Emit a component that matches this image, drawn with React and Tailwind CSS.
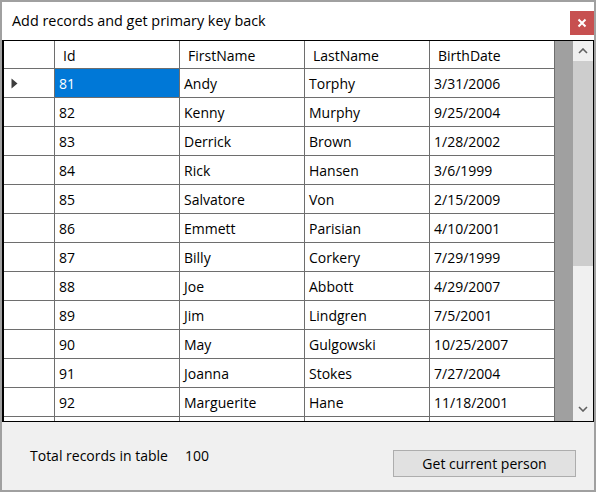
import React from "react";

const rows = [
  ["81", "Andy", "Torphy", "3/31/2006"],
  ["82", "Kenny", "Murphy", "9/25/2004"],
  ["83", "Derrick", "Brown", "1/28/2002"],
  ["84", "Rick", "Hansen", "3/6/1999"],
  ["85", "Salvatore", "Von", "2/15/2009"],
  ["86", "Emmett", "Parisian", "4/10/2001"],
  ["87", "Billy", "Corkery", "7/29/1999"],
  ["88", "Joe", "Abbott", "4/29/2007"],
  ["89", "Jim", "Lindgren", "7/5/2001"],
  ["90", "May", "Gulgowski", "10/25/2007"],
  ["91", "Joanna", "Stokes", "7/27/2004"],
  ["92", "Marguerite", "Hane", "11/18/2001"],
  ["", "", "", ""],
];

const headers = ["Id", "FirstName", "LastName", "BirthDate"];

export default function App() {
  return (
    <div
      className="w-[596px] h-[492px] border-2 border-[#a0a0a0] bg-[#f0f0f0] flex flex-col text-[14px] text-black overflow-hidden"
      style={{ fontFamily: '"Open Sans", "Noto Sans", sans-serif' }}
    >
      {/* Title bar */}
      <div className="h-[38px] shrink-0 bg-white flex items-center pl-[10px]">
        <span className="leading-none text-[14.4px]">Add records and get primary key back</span>
        <div className="ml-auto w-[24px] h-[24px] bg-[#c75050] flex items-center justify-center self-start mt-[9px]">
          <svg width="10" height="10" viewBox="0 0 10 10">
            <path d="M1.5 1.5 L8.5 8.5 M8.5 1.5 L1.5 8.5" stroke="white" strokeWidth="2" />
          </svg>
        </div>
      </div>

      {/* Grid */}
      <div className="h-[382px] shrink-0 border border-l-2 border-black bg-[#a0a0a0] flex">
        <div className="w-[551px] h-full bg-white flex flex-col overflow-hidden">
          <div className="h-[28px] shrink-0 flex">
            <div className="w-[51px] h-full border-r border-b border-[#6e6e6e] bg-white" />
            {headers.map((h) => (
              <div
                key={h}
                className="w-[125px] h-full border-r border-b border-[#6e6e6e] flex items-center pl-[8px] pt-[1px]"
              >
                {h}
              </div>
            ))}
          </div>
          {rows.map((r, i) => (
            <div key={i} className="h-[29px] shrink-0 flex">
              <div className="w-[51px] h-full border-r border-b border-[#6e6e6e] flex items-center pl-[7px]">
                {i === 0 && (
                  <svg width="7" height="11" viewBox="0 0 7 11">
                    <path d="M0.5 0.5 L6.5 5.5 L0.5 10.5 Z" fill="#3c3c3c" />
                  </svg>
                )}
              </div>
              {r.map((c, j) => (
                <div
                  key={j}
                  className={
                    i === 0 && j === 0
                      ? "w-[125px] h-full border-r border-b border-[#6e6e6e] flex items-center pl-[4px] bg-[#0078d7] text-white"
                      : "w-[125px] h-full border-r border-b border-[#6e6e6e] flex items-center pl-[4px]"
                  }
                >
                  {c}
                </div>
              ))}
            </div>
          ))}
        </div>
        <div className="w-[18px] h-full bg-[#a0a0a0]" />
        {/* Scrollbar */}
        <div className="w-[20px] h-full bg-[#f0f0f0] flex flex-col">
          <div className="h-[20px] shrink-0 flex items-center justify-center">
            <svg width="10" height="6" viewBox="0 0 10 6">
              <path d="M1 5 L5 1 L9 5" stroke="#606060" strokeWidth="1.6" fill="none" />
            </svg>
          </div>
          <div className="h-[205px] shrink-0 bg-[#cdcdcd]" />
          <div className="flex-1" />
          <div className="h-[20px] shrink-0 flex items-center justify-center mb-[2px]">
            <svg width="10" height="6" viewBox="0 0 10 6">
              <path d="M1 1 L5 5 L9 1" stroke="#606060" strokeWidth="1.6" fill="none" />
            </svg>
          </div>
        </div>
      </div>

      {/* Bottom panel */}
      <div className="flex-1 flex items-start">
        <div className="pl-[28px] pt-[23px] flex">
          <span>Total records in table</span>
          <span className="ml-[17px]">100</span>
        </div>
        <button className="ml-auto mr-[18px] mt-[28px] w-[183px] h-[27px] bg-[#e1e1e1] border border-[#adadad] flex items-center justify-center">
          Get current person
        </button>
      </div>
    </div>
  );
}
